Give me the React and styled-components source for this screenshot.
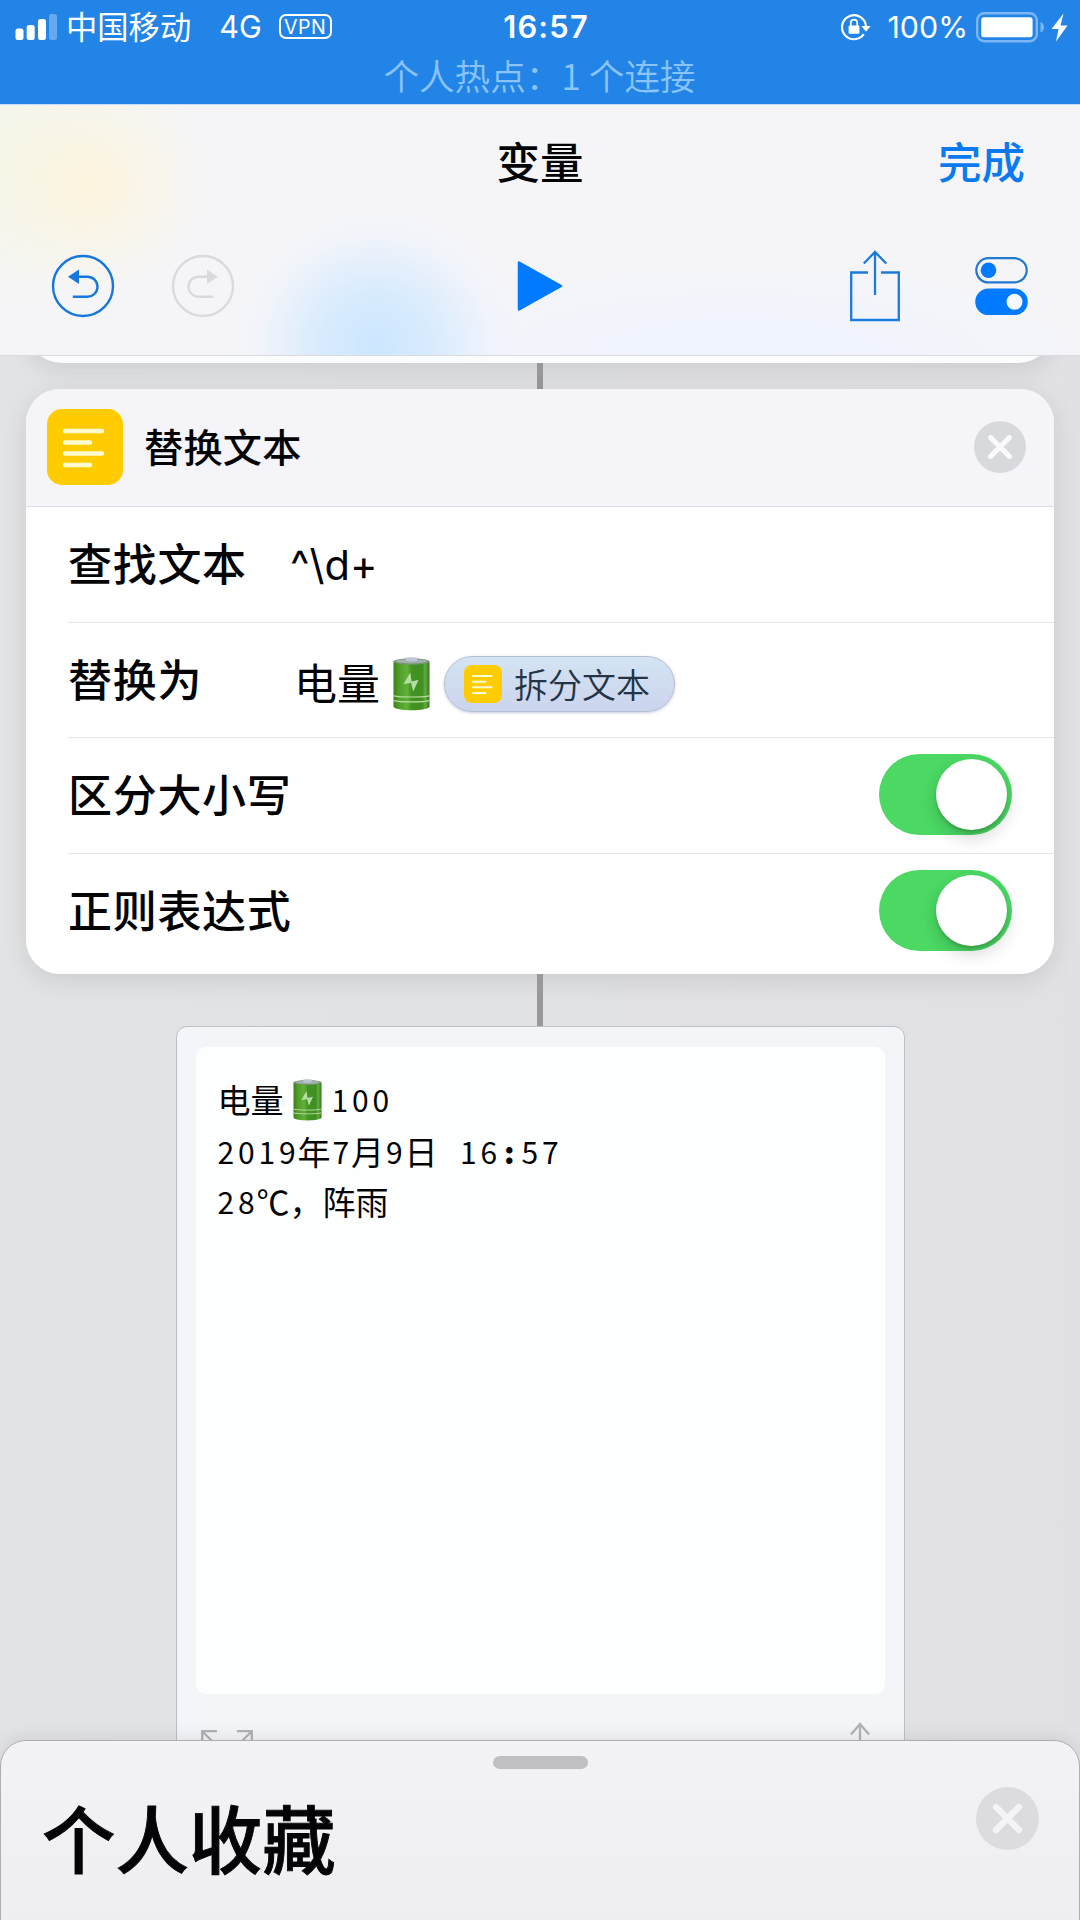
import React from "react";
import styled, { createGlobalStyle } from "styled-components";

const UI = `Inter, "Noto Sans CJK SC", sans-serif`;
const HAN = `"Noto Sans CJK SC", sans-serif`;

const GlobalStyle = createGlobalStyle`
  * { box-sizing: border-box; }
  body { margin: 0; background: #e1e1e4; }
  svg { display: block; flex: none; }
  button { border: 0; padding: 0; background: none; font: inherit; color: inherit; display: block; }
`;

const Screen = styled.div`
  width: 1080px;
  height: 1920px;
  display: flex;
  flex-direction: column;
  overflow: hidden;
  background: linear-gradient(90deg, #e1e3e4, #e1e1e5);
  font-family: ${UI};
  color: #040406;
`;

/* ---------- status bar ---------- */

const StatusBar = styled.div`
  flex: none;
  height: 104px;
  background: #2384e8;
  color: #fff;
`;

const StatusRow = styled.div`
  height: 54px;
  display: grid;
  grid-template-columns: 1fr auto 1fr;
  align-items: center;
  padding: 0 12px 0 15px;
  font-size: 30.5px;
  line-height: 54px;
`;

const StatusSide = styled.div`
  display: flex;
  align-items: center;
  justify-content: ${(p) => (p.$end ? "flex-end" : "flex-start")};
  height: 54px;
`;

const Carrier = styled.span`
  font-family: ${HAN};
  font-size: 31.3px;
  line-height: 52px;
  margin: 0 0 2px 8px;
`;

const Network = styled.span`
  margin-left: 28px;
  font-size: 30.5px;
`;

const VpnBadge = styled.span`
  width: 53px;
  height: 25px;
  margin: 0 0 1px 17px;
  border: 2px solid #fff;
  border-radius: 7px;
  display: flex;
  align-items: center;
  justify-content: center;
  font-size: 19.6px;
  line-height: 20px;
  letter-spacing: 0.5px;
`;

const Clock = styled.span`
  font-weight: 600;
  font-size: 30.8px;
  letter-spacing: 1.2px;
  padding-left: 9px;
`;

const Percent = styled.span`
  font-size: 30.4px;
  margin: 0 8px 0 16px;
`;

const Hotspot = styled.div`
  height: 44px;
  text-align: center;
  font-family: ${HAN};
  font-weight: 350;
  font-size: 35.6px;
  line-height: 41px;
  color: #8ac4fb;
  padding-right: 1px;
`;

/* ---------- navigation header ---------- */

const Header = styled.header`
  flex: none;
  height: 252px;
  border-top: 1px solid #c5dbf5;
  border-bottom: 1px solid #d9dbde;
  background:
    radial-gradient(ellipse 145px 140px at 375px 240px, rgba(204, 230, 255, 1) 0%, rgba(210, 233, 255, 0.8) 40%, rgba(232, 241, 255, 0.25) 80%, rgba(236, 243, 255, 0) 100%),
    radial-gradient(ellipse 120px 110px at 88px 80px, rgba(252, 243, 220, 0.95) 0%, rgba(251, 244, 228, 0.6) 50%, rgba(247, 246, 240, 0) 100%),
    radial-gradient(ellipse 190px 150px at 20px 60px, rgba(243, 246, 228, 0.9) 0%, rgba(246, 246, 240, 0) 100%),
    radial-gradient(ellipse 380px 100px at 740px 250px, rgba(238, 243, 254, 1) 0%, rgba(246, 247, 251, 0) 100%),
    #f5f5f8;
`;

const TitleRow = styled.div`
  height: 112px;
  display: grid;
  grid-template-columns: 1fr auto 1fr;
  align-items: center;
  padding: 0 55px;
  font-size: 43.5px;
  line-height: 60px;
  font-weight: 500;
  font-family: ${HAN};
`;

const Title = styled.h1`
  grid-column: 2;
  margin: 0;
  font: inherit;
`;

const DoneButton = styled.button`
  justify-self: end;
  color: #0b7af0;
`;

const Toolbar = styled.div`
  height: 138px;
  display: grid;
  grid-template-columns: 1fr auto 1fr;
  align-items: center;
  padding: 0 52px 0 51px;
`;

const ToolGroup = styled.div`
  display: flex;
  align-items: center;
  justify-content: ${(p) => (p.$end ? "flex-end" : "flex-start")};
  gap: ${(p) => p.$gap}px;
`;

/* ---------- workflow canvas ---------- */

const Canvas = styled.main`
  flex: 1;
  min-height: 0;
  overflow: hidden;
  display: flex;
  flex-direction: column;
  align-items: center;
`;

const PreviousCard = styled.div`
  flex: none;
  width: 1028px;
  height: 87px;
  margin-top: -80px;
  background: #fbfcfd;
  border-radius: 36px;
  box-shadow: 0 6px 24px rgba(0, 0, 0, 0.1);
`;

const Connector = styled.div`
  flex: none;
  width: 6px;
  height: ${(p) => p.$length}px;
  background: #98989c;
`;

const ActionCard = styled.section`
  flex: none;
  width: 1028px;
  height: 585px;
  border-radius: 34px;
  background: #fff;
  box-shadow: 0 6px 26px rgba(0, 0, 0, 0.1);
`;

const ActionHeader = styled.div`
  height: 118px;
  display: flex;
  align-items: center;
  padding: 0 28px 2px 21px;
  background: #f4f4f9;
  border-bottom: 1px solid #dfe0e3;
  border-radius: 34px 34px 0 0;
`;

const ActionName = styled.h2`
  flex: 1;
  margin: 0 0 3px 21px;
  font: 500 39.2px/56px ${HAN};
  letter-spacing: 0.2px;
`;

const Row = styled.div`
  height: ${(p) => p.$h}px;
  margin-left: 42px;
  padding: 0 42px 2px 0;
  display: flex;
  align-items: center;
  border-bottom: ${(p) => (p.$last ? 0 : 1)}px solid #e6e7e9;
`;

const RowLabel = styled.div`
  width: 222px;
  margin-bottom: 3px;
  white-space: nowrap;
  font: 500 44px/64px ${HAN};
  letter-spacing: 0.7px;
`;

const RowValue = styled.div`
  display: flex;
  align-items: center;
  padding: ${(p) => (p.$rich ? "9px 0 0 4px" : "2px 0 0")};
  font-size: ${(p) => (p.$rich ? 43 : 41.6)}px;
  line-height: 64px;
  font-weight: 400;

  > svg {
    margin-left: 13px;
  }
`;

const Spacer = styled.div`
  flex: 1;
`;

const VariablePill = styled.span`
  height: 56px;
  width: 231px;
  margin-left: 14px;
  padding-left: 19px;
  display: flex;
  align-items: center;
  gap: 12px;
  border: 1px solid #b4bdd2;
  border-radius: 28px;
  background: linear-gradient(#d3e4f2, #ccd4ee);
  box-shadow: 0 1px 3px rgba(90, 110, 160, 0.35);
  color: #233447;
  font: 350 34px/50px ${HAN};
`;

const SwitchTrack = styled.div`
  width: 133px;
  height: 81px;
  padding: 5px;
  display: flex;
  justify-content: flex-end;
  border-radius: 41px;
  background: #4bd964;
`;

const SwitchKnob = styled.div`
  width: 71px;
  height: 71px;
  border-radius: 50%;
  background: #fff;
  box-shadow: 0 7px 18px rgba(0, 0, 0, 0.18), 0 3px 3px rgba(0, 0, 0, 0.14);
`;

/* ---------- result preview ---------- */

const ResultCard = styled.section`
  flex: none;
  width: 729px;
  height: 800px;
  padding: 20px 19px 0;
  border: 1px solid #bcc0c4;
  border-radius: 11px;
  background: #f4f5f8;
`;

const ResultText = styled.div`
  height: 647px;
  padding: 25px 22px;
  border-radius: 10px;
  background: #fdfefe;
  font-family: ${HAN};
`;

const ResultLine = styled.div`
  height: ${(p) => p.$h}px;
  display: flex;
  align-items: center;
  font-size: 33px;
  line-height: 50px;
  white-space: pre;

  > svg {
    margin: 2px 0 0 9px;
  }
`;

const Cells = styled.span`
  display: flex;
  margin-left: ${(p) => p.$ml || 0}px;
  font-size: 30px;
`;

const Cell = styled.span`
  width: 20.5px;
  text-align: center;
  font-weight: ${(p) => (p.$bold ? 900 : 400)};
`;

const ResultActions = styled.div`
  display: flex;
  justify-content: space-between;
  align-items: flex-start;
  padding: 28px 5px 0 4px;
`;

/* ---------- bottom sheet ---------- */

const Sheet = styled.section`
  position: relative;
  flex: none;
  height: 204px;
  margin: -25px 0 -24px;
  display: flex;
  flex-direction: column;
  align-items: center;
  padding: 15px 40px 0;
  border: 1px solid #aeaeb0;
  border-radius: 26px 26px 0 0;
  background: linear-gradient(#f3f3f5, #eeeef0);
  box-shadow: 0 -2px 18px rgba(0, 0, 0, 0.09);
`;

const Grabber = styled.div`
  flex: none;
  width: 95px;
  height: 13px;
  border-radius: 7px;
  background: #c0c0c2;
`;

const SheetHead = styled.div`
  align-self: stretch;
  display: flex;
  justify-content: space-between;
  align-items: flex-start;
  padding-top: 18px;
`;

const SheetTitle = styled.h2`
  margin: -1px 0 0 1px;
  font: 500 73.4px/100px ${HAN};
  -webkit-text-stroke: 0.9px #040406;
`;

/* ---------- drawings ---------- */

const Signal = () => (
  <svg width="43" height="28" viewBox="0 0 43 28" fill="#fff">
    <rect x="0.5" y="15.5" width="8" height="11.5" rx="2.5" />
    <rect x="11.7" y="12" width="8" height="15" rx="2.5" />
    <rect x="23" y="6" width="8" height="21" rx="2.5" />
    <rect x="34" y="1" width="8" height="26" rx="2.5" opacity=".3" />
  </svg>
);

const RotationLock = () => (
  <svg width="30" height="28" viewBox="0 0 30 28" fill="none" stroke="#fff" strokeWidth="2.2">
    <path d="M25 13.500A12 12 0 1 0 22.800 21.200" />
    <path d="M20.400 13H29.600L25 18.800Z" fill="#fff" stroke="none" />
    <rect x="7.600" y="12.600" width="10.800" height="8.200" rx="1.200" fill="#fff" stroke="none" />
    <path d="M9.800 13V9.800a3.200 3.200 0 0 1 6.400 0V13" strokeWidth="1.700" />
  </svg>
);

const BatteryStatus = () => (
  <svg width="92" height="32" viewBox="0 0 92 32">
    <rect x="1.2" y="2.200" width="59.600" height="28" rx="7" fill="none" stroke="#7db6f4" strokeWidth="2.400" />
    <rect x="5.200" y="6.200" width="51.400" height="20" rx="2.600" fill="#fff" />
    <path d="M64.500 11c2.300.8 3.400 2.700 3.400 5.200s-1.100 4.400-3.400 5.200z" fill="#7db6f4" />
    <path d="M87.500 2.500L75.500 18h7L80 30.500 91.500 14.500h-7z" fill="#fff" />
  </svg>
);

const Undo = ({ color, flipped }) => (
  <svg width="64" height="64" viewBox="0 0 64 64" fill="none" stroke={color} strokeWidth="2.4">
    <circle cx="32" cy="32" r="30" />
    <g transform={flipped ? "translate(64 0) scale(-1 1)" : undefined}>
      <path d="M27 22.700h9.500a10 10 0 0 1 0 20H21.800" />
      <path d="M17 22.700L28 15.400v14.600z" fill={color} stroke="none" />
    </g>
  </svg>
);

const Play = () => (
  <svg width="46" height="52" viewBox="0 0 46 52">
    <path d="M2 2.500V49.500L44 26Z" fill="#007aff" stroke="#007aff" strokeWidth="2.500" strokeLinejoin="round" />
  </svg>
);

const Share = () => (
  <svg width="52" height="72" viewBox="0 0 52 72" fill="none" stroke="#1a7bdc" strokeWidth="2.300">
    <path d="M19 22.500H2.200V70H49.800V22.500H32" />
    <path d="M26 45V2M14.800 13.500L26 2l11.200 11.500" />
  </svg>
);

const Settings = () => (
  <svg width="53" height="60" viewBox="0 0 53 60">
    <rect x="1.300" y="2.200" width="50.400" height="24.200" rx="12.100" fill="none" stroke="#2379d0" strokeWidth="2.200" />
    <circle cx="13.500" cy="14.300" r="7.800" fill="#007aff" />
    <rect x="0.200" y="32.500" width="52.600" height="26.600" rx="13.300" fill="#007aff" />
    <circle cx="39.500" cy="45.800" r="8" fill="#f6f9fe" />
  </svg>
);

const TextGlyph = ({ size }) => (
  <svg width={size} height={size} viewBox="0 0 76 76">
    <rect width="76" height="76" rx="15" fill="#ffcc02" />
    <path d="M18 22h37M18 33.500h25M18 44.500h37M18 56h25" stroke="#fffbd0" strokeWidth="4.400" strokeLinecap="round" />
  </svg>
);

const Close = ({ size, fill, cross }) => (
  <svg width={size} height={size} viewBox="0 0 52 52">
    <circle cx="26" cy="26" r="26" fill={fill} />
    <path d="M16.500 16.500l19 19M35.500 16.500L16.500 35.500" stroke={cross} strokeWidth="5.200" strokeLinecap="round" />
  </svg>
);

const BatteryEmoji = ({ width, height, id }) => (
  <svg width={width} height={height} viewBox="0 0 37 54">
    <defs>
      <linearGradient id={id} x1="0" x2="1" y1="0" y2="0">
        <stop offset="0" stopColor="#3d7f1c" />
        <stop offset=".15" stopColor="#4f9e28" />
        <stop offset=".38" stopColor="#62b038" />
        <stop offset=".5" stopColor="#439423" />
        <stop offset=".8" stopColor="#3f8f22" />
        <stop offset=".88" stopColor="#62ad40" />
        <stop offset="1" stopColor="#35751b" />
      </linearGradient>
    </defs>
    <path d="M.5 4.500V49.500C1.500 54.500 35.500 54.500 36.500 49.500V4.500z" fill={`url(#${id})`} />
    <ellipse cx="18.500" cy="4.500" rx="18" ry="3.200" fill="#75936e" />
    <ellipse cx="18.500" cy="4.200" rx="15.500" ry="2.300" fill="#9fb0ae" />
    <path d="M13 .8c2-.8 9-.8 11 0v3c-2 1-9 1-11 0z" fill="#bcc6d6" />
    <path d="M.8 38.800c6 1.600 29.400 1.600 35.400 0M.8 43.600c6 1.600 29.400 1.600 35.400 0" fill="none" stroke="#b9dda0" strokeWidth="1.200" />
    <path d="M17.200 15.500L10.500 27.300l7.500-1.500 2.200 8.700 5.400-11.700-7 1.700z" fill="#b5dda4" />
  </svg>
);

const Expand = styled(({ className }) => (
  <svg className={className} width="54" height="54" viewBox="0 0 54 54" fill="none" stroke="#b1b2b4" strokeWidth="2.300">
    <path d="M17 2.200H2.200V17M2.200 2.200L19 19M37 2.200H51.800V17M51.800 2.200L35 19M17 51.800H2.200V37M2.200 51.800L19 35M37 51.800H51.800V37M51.800 51.800L35 35" />
  </svg>
))`
  margin-top: 7px;
`;

const SmallShare = () => (
  <svg width="40" height="56" viewBox="0 0 40 56" fill="none" stroke="#b1b2b4" strokeWidth="2.300">
    <path d="M20 34V2M11 12.500L20 2l9 10.500M13 20H2v34h36V20H27" />
  </svg>
);

const Switch = () => (
  <SwitchTrack>
    <SwitchKnob />
  </SwitchTrack>
);

/* Digits of the preview sit in equal-width cells, as in a monospaced face. */
const Mono = ({ text, ml }) => (
  <Cells $ml={ml}>
    {[...text].map((ch, i) => (
      <Cell key={i} $bold={ch === ":"}>
        {ch}
      </Cell>
    ))}
  </Cells>
);

export default function App() {
  return (
    <Screen>
      <GlobalStyle />
      <StatusBar>
        <StatusRow>
          <StatusSide>
            <Signal />
            <Carrier>中国移动</Carrier>
            <Network>4G</Network>
            <VpnBadge>VPN</VpnBadge>
          </StatusSide>
          <Clock>16:57</Clock>
          <StatusSide $end>
            <RotationLock />
            <Percent>100%</Percent>
            <BatteryStatus />
          </StatusSide>
        </StatusRow>
        <Hotspot>个人热点：1 个连接</Hotspot>
      </StatusBar>

      <Header>
        <TitleRow>
          <Title>变量</Title>
          <DoneButton>完成</DoneButton>
        </TitleRow>
        <Toolbar>
          <ToolGroup $gap={56}>
            <Undo color="#1677de" />
            <Undo color="#d9dadc" flipped />
          </ToolGroup>
          <Play />
          <ToolGroup $end $gap={74}>
            <Share />
            <Settings />
          </ToolGroup>
        </Toolbar>
      </Header>

      <Canvas>
        <PreviousCard />
        <Connector $length={26} />
        <ActionCard>
          <ActionHeader>
            <TextGlyph size={76} />
            <ActionName>替换文本</ActionName>
            <Close size={52} fill="#d7d9dd" cross="#fafafc" />
          </ActionHeader>
          <Row $h={116}>
            <RowLabel>查找文本</RowLabel>
            <RowValue>^\d+</RowValue>
          </Row>
          <Row $h={115}>
            <RowLabel>替换为</RowLabel>
            <RowValue $rich>
              电量
              <BatteryEmoji id="cellLarge" width={37} height={54} />
              <VariablePill>
                <TextGlyph size={38} />
                拆分文本
              </VariablePill>
            </RowValue>
          </Row>
          <Row $h={116}>
            <RowLabel>区分大小写</RowLabel>
            <Spacer />
            <Switch />
          </Row>
          <Row $h={115} $last>
            <RowLabel>正则表达式</RowLabel>
            <Spacer />
            <Switch />
          </Row>
        </ActionCard>
        <Connector $length={52} />
        <ResultCard>
          <ResultText>
            <ResultLine $h={53}>
              电量
              <BatteryEmoji id="cellSmall" width={29} height={42} />
              <Mono ml={8} text="100" />
            </ResultLine>
            <ResultLine $h={51}>
              <Mono ml={-2} text="2019" />年<Mono text="7" />月<Mono text="9" />日
              <Mono text=" 16:57" />
            </ResultLine>
            <ResultLine $h={50}>
              <Mono ml={-2} text="28" />
              ℃，阵雨
            </ResultLine>
          </ResultText>
          <ResultActions>
            <Expand />
            <SmallShare />
          </ResultActions>
        </ResultCard>
      </Canvas>

      <Sheet>
        <Grabber />
        <SheetHead>
          <SheetTitle>个人收藏</SheetTitle>
          <Close size={63} fill="#dcdcde" cross="#f4f4f6" />
        </SheetHead>
      </Sheet>
    </Screen>
  );
}
